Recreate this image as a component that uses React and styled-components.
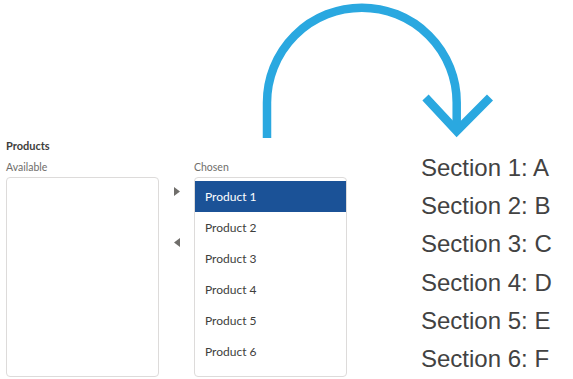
import React from "react";
import styled, { createGlobalStyle } from "styled-components";

const Global = createGlobalStyle`
  html, body { margin: 0; padding: 0; background: #ffffff; }
  body { font-family: Lato, "Noto Sans", sans-serif; }
`;

const Page = styled.div`
  width: 573px;
  height: 379px;
  overflow: hidden;
  display: flex;
  flex-direction: column;
`;

const ArrowArt = styled.svg`
  display: block;
  margin-left: 255px;
  width: 245px;
  height: 140px;
  flex: none;
`;

const Bottom = styled.div`
  display: flex;
  align-items: flex-start;
`;

const Picklist = styled.fieldset`
  margin: 0;
  border: 0;
  padding: 0 0 0 6px;
  width: 341px;
  flex: none;
`;

const Legend = styled.div`
  font-size: 11px;
  line-height: 12px;
  font-weight: 700;
  color: #3e3e3c;
  margin-bottom: 9px;
`;

const Columns = styled.div`
  display: flex;
  align-items: flex-start;
`;

const Column = styled.div`
  width: 153px;
  flex: none;
`;

const ColLabel = styled.div`
  font-size: 10.5px;
  line-height: 12px;
  color: #706e6b;
  margin-bottom: 4px;
`;

const ListBox = styled.ul`
  list-style: none;
  margin: 0;
  box-sizing: border-box;
  height: 200px;
  padding: 3px 0 0;
  border: 1px solid #dddbda;
  border-radius: 4px;
  background: #fff;
  overflow: hidden;
`;

const Option = styled.li`
  height: 31px;
  display: flex;
  align-items: center;
  padding-left: 10px;
  font-size: 12px;
  color: ${(p) => (p.$selected ? "#ffffff" : "#3e3e3c")};
  background: ${(p) => (p.$selected ? "#1b5297" : "transparent")};
`;

const ButtonCol = styled.div`
  width: 35px;
  flex: none;
  display: flex;
  flex-direction: column;
  align-items: center;
  gap: 27px;
  padding-top: 18px;
`;

const MoveButton = styled.button`
  width: 20px;
  height: 24px;
  border: 0;
  padding: 0;
  background: transparent;
  display: flex;
  align-items: center;
  justify-content: center;
  svg { display: block; fill: #706e6b; }
`;

const Sections = styled.ol`
  list-style: none;
  margin: 9px 0 0 74px;
  padding: 0;
  font-family: "Liberation Sans", Arial, sans-serif;
  font-size: 24px;
  line-height: 38.2px;
  color: #424242;
  white-space: nowrap;
`;

const Triangle = ({ dir }) => (
  <svg width="6" height="9" viewBox="0 0 6 9">
    {dir === "right" ? <path d="M0 0 L6 4.5 L0 9 Z" /> : <path d="M6 0 L0 4.5 L6 9 Z" />}
  </svg>
);

const products = ["Product 1", "Product 2", "Product 3", "Product 4", "Product 5", "Product 6"];
const sections = ["Section 1: A", "Section 2: B", "Section 3: C", "Section 4: D", "Section 5: E", "Section 6: F"];

export default function App() {
  return (
    <>
      <Global />
      <Page>
        <ArrowArt viewBox="0 0 245 140">
          <g fill="none" stroke="#2aa8e0" strokeWidth="8.5">
            <path d="M12 138 V102.5 A94.85 94.85 0 0 1 201.7 102.5 V131" strokeLinecap="butt" />
            <path d="M170.5 97.5 L201.7 131 L235 97.5" strokeLinejoin="miter" strokeMiterlimit="10" strokeLinecap="butt" />
          </g>
        </ArrowArt>
        <Bottom>
          <Picklist>
            <Legend>Products</Legend>
            <Columns>
              <Column>
                <ColLabel>Available</ColLabel>
                <ListBox />
              </Column>
              <ButtonCol>
                <MoveButton aria-label="Move to Chosen"><Triangle dir="right" /></MoveButton>
                <MoveButton aria-label="Move to Available"><Triangle dir="left" /></MoveButton>
              </ButtonCol>
              <Column>
                <ColLabel>Chosen</ColLabel>
                <ListBox>
                  {products.map((p, i) => (
                    <Option key={p} $selected={i === 0}>{p}</Option>
                  ))}
                </ListBox>
              </Column>
            </Columns>
          </Picklist>
          <Sections>
            {sections.map((s) => (
              <li key={s}>{s}</li>
            ))}
          </Sections>
        </Bottom>
      </Page>
    </>
  );
}
